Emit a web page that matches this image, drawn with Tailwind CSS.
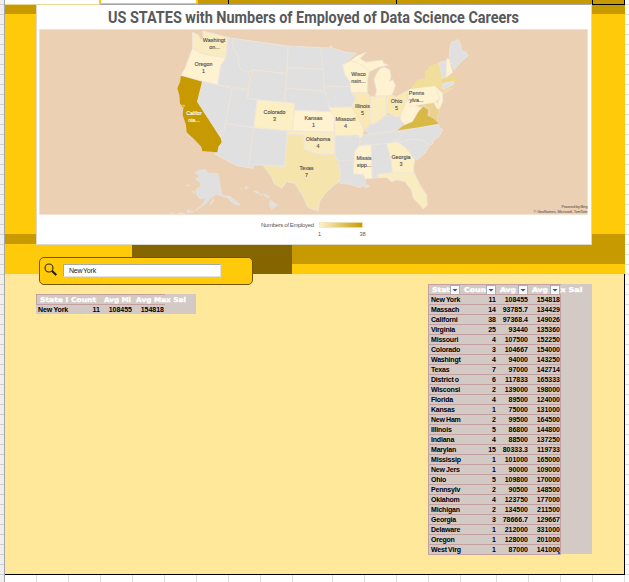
<!DOCTYPE html>
<html lang="en">
<head>
<meta charset="utf-8">
<title>Data Science Careers</title>
<script src="https://cdn.jsdelivr.net/npm/@tailwindcss/browser@4"></script>
</head>
<body class="w-[629px] h-[582px] overflow-hidden bg-white font-['Liberation_Sans',sans-serif]">
<div class="flex w-[629px] h-[582px]">
  <div class="w-[5px] h-full border-r border-[#a6a6a6] bg-[repeating-linear-gradient(to_bottom,#efefef_0_4px,#d0d0d0_4px_5px,#efefef_5px_10px)]"></div>
  <main class="relative w-[620px] h-full flex flex-col">
    <!-- cell row above the chart -->
    <div class="flex h-[4px] shrink-0">
      <div class="w-[94px] bg-white"></div>
      <div class="w-[99px] bg-white border-x-2 border-b border-[#ffca0a]"></div>
      <div class="w-[30px] bg-[#c69a00]"></div>
      <div class="w-px bg-black"></div>
      <div class="w-[167px] bg-[#c69a00]"></div>
      <div class="w-px bg-black"></div>
      <div class="w-[195px] bg-[#c69a00]"></div>
      <div class="w-[33px] bg-[#c69a00] border-x border-black"></div>
    </div>
    <!-- chart band -->
    <div class="flex h-[241px] shrink-0">
      <div class="w-[31px] flex flex-col bg-[#ffca0a] border-t border-[#ecd58c]">
        <div class="h-[9px] bg-[#c69a00]"></div><div class="h-[220px]"></div><div class="h-[10px] bg-[#c69a00]"></div>
      </div>
      <section class="w-[556px] bg-white border-x border-b border-[#dcd8cc] flex flex-col items-start">
        <div class="w-full h-px shrink-0 flex"><div class="w-[63px] bg-[#ecd58c]"></div><div class="grow bg-[#a6a6a6]"></div></div>
        <svg class="w-[554px] h-[24px] shrink-0" viewBox="37 5 554 24"><text x="108" y="23" font-family="Roboto, sans-serif" font-weight="700" font-size="16.2" fill="#595959" textLength="411" lengthAdjust="spacingAndGlyphs">US STATES with Numbers of Employed of Data Science Careers</text></svg>
        <svg class="w-[549px] h-[186px] shrink-0 ml-[2px]" viewBox="39 29 549 186">
          <rect x="39" y="29" width="549" height="186" fill="#f3e2d0"/>
          <rect x="40" y="30" width="547" height="184" fill="#ebd0b3"/>
          <g transform="translate(170 25) scale(.33333)" stroke="#efe6dc" stroke-width="2.6" stroke-linejoin="round" fill="#e0e0e0">
            <path fill="#f9ecc0" d="M67 22L85 30L92 45L100 38L98 18L174 37L166 98L120 92L85 82L68 68Z"/>
            <path fill="#fff2d0" d="M68 68L85 82L120 92L166 98L160 118L152 120L144 180L33 152L45 130Z"/>
            <path d="M96 170L187 190L166 310L156 318L152 338L81 230Z"/>
            <path d="M174 37L188 40L190 70L205 95L210 130L240 142L235 193L144 180L152 122L168 98Z"/>
            <path d="M188 40L355 63L350 145L246 135L240 142L222 140L208 128L205 95L190 72Z"/>
            <path d="M246 135L350 146L343 232L232 220Z"/>
            <path d="M187 190L235 195L232 220L262 224L250 308L166 296Z"/>
            <path d="M166 296L250 308L236 428L200 422L136 388L150 360L155 345L150 320L162 318Z"/>
            <path d="M250 308L352 318L344 424L280 420L250 420L250 430L236 428Z"/>
            <path d="M355 63L452 68L460 133L352 128Z"/>
            <path d="M352 128L460 133L463 160L462 200L445 197L347 190Z"/>
            <path d="M347 190L445 197L465 203L478 235L484 260L373 256L373 235L343 232Z"/>
            <path fill="#fdefc4" d="M262 224L373 235L368 318L252 308Z"/>
            <path fill="#fff2d0" d="M373 256L484 260L492 270L493 322L368 318Z"/>
            <path fill="#f9ecc0" d="M352 318L493 322L495 388L460 388L430 383L402 372L402 330L352 328Z"/>
            <path fill="#f5e5ad" d="M352 328L402 330L402 372L430 383L445 390L460 387L497 392L510 440L508 470L488 484L470 500L448 530L445 557L425 552L412 545L400 515L375 475L350 470L335 490L312 475L305 455L280 422L344 424Z"/>
            <path stroke="none" fill="#c69a00" d="M33 152L96 170L81 230L152 340L155 352L145 365L142 382L97 378L94 365L75 345L50 322L48 300L38 270L40 250L30 235L28 210L22 190L30 172Z"/>
            <path stroke="#f0dfb0" stroke-width="2" d="M34 241L44 241L39 250" fill="none"/>
            <path stroke-width="1" d="M75 443L88 436L105 433L118 445L145 445L155 508L172 514L190 522L209 536L207 542L190 536L172 518L150 512L140 508L131 514L122 520L106 538L85 552L70 560L98 538L107 520L90 522L80 510L78 493L92 483L90 470L75 463L88 455Z"/>
            <path stroke-width="1" d="M50 478L60 482L53 484ZM65 498L76 500L72 506ZM54 555L72 560L50 564ZM0 562L12 564L5 567ZM22 566L34 563L45 567ZM120 534L130 522L132 526L122 540ZM176 512L184 516L178 519ZM222 487L228 484L236 488L229 493ZM212 490L215 488L216 493ZM252 498L261 498L269 506L258 504ZM270 508L279 509L275 512ZM281 506L299 515L291 519L283 512ZM300 525L317 536L322 541L304 554L298 540Z"/>
            <path fill="none" stroke-dasharray="3 5" d="M52 332L62 335L70 344M62 355L74 361"/>
          </g>
          <g transform="translate(310 25) scale(.33333)" stroke="#efe6dc" stroke-width="2.2" stroke-linejoin="round" fill="#e0e0e0">
            <path d="M32 68L60 68L62 60L68 70L90 76L108 82L140 85L115 105L98 125L105 150L122 170L122 185L42 184L40 133Z"/>
            <path d="M42 184L122 185L130 205L138 220L125 248L58 246L48 210Z"/>
            <path d="M75 332L150 333L150 355L135 380L133 406L84 406L76 395Z"/>
            <path d="M84 406L133 406L130 445L162 448L158 458L168 465L164 474L178 484L168 488L158 482L150 488L138 484L120 478L90 475L92 440Z"/>
            <path d="M165 318L185 298L210 288L230 270L270 275L280 295L262 315L180 328Z"/>
            <path d="M155 330L185 328L290 315L262 345L240 355L148 362Z"/>
            <path d="M290 315L385 298L390 310L398 314L388 334L372 345L365 360L335 345L300 343L275 350L245 355L262 343Z"/>
            <path d="M265 352L300 343L335 345L360 360L345 385L320 406L290 372Z"/>
            <path d="M185 360L230 355L245 410L246 443L202 448L205 458L185 460Z"/>
            <path fill="#fdefc4" d="M56 248L125 246L135 265L150 290L162 315L158 330L150 340L145 330L75 332L73 275Z"/>
            <path fill="#fff2d0" d="M98 120L120 108L140 112L165 125L178 140L172 165L172 203L124 203L120 170L105 150Z"/>
            <path fill="#fff2d0" d="M120 108L140 93L168 82L158 92L150 101L168 112L195 108L218 106L222 116L235 120L205 127L178 140L160 122L140 112Z"/>
            <path fill="#fff2d0" d="M210 132L222 126L240 135L243 155L238 170L248 164L256 182L248 205L240 213L196 213L200 195L192 165L200 145Z"/>
            <path fill="#f9e8b4" d="M124 203L172 203L180 215L184 280L178 300L165 315L150 290L132 262L128 240L138 220Z"/>
            <path fill="#f9ecc0" d="M182 215L227 212L230 268L200 292L182 298Z"/>
            <path fill="#f9e8b4" d="M229 212L245 210L258 216L290 198L293 230L272 272L258 275L229 262Z"/>
            <path fill="#fff2d0" d="M293 225L315 240L340 240L325 258L308 290L285 300L272 285L272 270Z"/>
            <path fill="#fff2d0" d="M292 198L304 190L375 182L390 198L388 220L375 233L300 245Z"/>
            <path fill="#fff2d0" d="M380 190L398 204L398 230L388 252L380 240L388 220Z"/>
            <path fill="#efdf9a" stroke="none" d="M303 192L320 165L345 160L345 140L360 122L385 113L397 165L398 198L375 182Z"/>
            <path fill="#efdf9a" stroke-width="1" d="M397 202L412 193L428 189L418 196L398 208Z"/>
            <path d="M387 113L410 107L408 155L397 162Z"/>
            <path fill="#fff2d0" d="M410 107L412 99L418 105L428 142L408 158Z"/>
            <path d="M418 98L418 80L421 62L426 50L434 50L440 44L448 47L456 78L468 82L475 92L455 108L448 116L432 135Z"/>
            <path d="M398 176L430 168L432 178L410 188L400 195Z"/>
            <path fill="#eed98a" stroke="none" d="M397 161L430 154L433 150L440 160L449 164L448 172L438 168L425 168L398 173Z"/>
            <path fill="#ead28a" stroke-width="1" d="M316 242L372 233L380 248L388 255L384 270L382 288L372 288L358 275L360 252L345 242L330 247Z"/>
            <path fill="#fff2d0" stroke-width="1" d="M372 233L378 229L388 254L380 250Z"/>
            <path fill="#d9b945" stroke="none" d="M262 316L285 300L308 290L325 262L340 245L355 255L352 272L375 283L385 296L330 306Z"/>
            <path fill="none" stroke="#ebd0b3" d="M364 245L372 262L366 270L376 288"/>
            <path fill="#fdefc4" d="M230 355L265 352L290 372L315 405L310 425L312 445L247 445L245 410Z"/>
            <path fill="#fff2d0" d="M148 362L183 360L186 460L165 462L160 448L130 447L133 406L135 380Z"/>
            <path fill="#f9ecc0" d="M203 448L247 443L312 443L330 480L350 510L352 540L340 552L325 535L310 520L304 495L285 470L262 465L245 470L230 458L205 458Z"/>
          </g>
          <g font-family="'Liberation Sans', sans-serif" font-size="5.4" fill="#4c4c4c" stroke="#4c4c4c" stroke-width=".12" text-anchor="middle">
            <text x="214" y="42">Washingt</text><text x="214.500" y="49">on...</text>
            <text x="203.500" y="66">Oregon</text><text x="203.500" y="73">1</text>
            <g fill="#fff" stroke="#fff"><text x="194" y="115">Califor</text><text x="194" y="122">nia...</text></g>
            <text x="274.500" y="114">Colorado</text><text x="274.500" y="121">3</text>
            <text x="313.500" y="120">Kansas</text><text x="313.500" y="127">1</text>
            <text x="318" y="141">Oklahoma</text><text x="318" y="148">4</text>
            <text x="306.500" y="170">Texas</text><text x="306.500" y="177">7</text>
            <text x="345.500" y="121">Missouri</text><text x="345.500" y="128">4</text>
            <text x="358.500" y="76">Wisco</text><text x="358.500" y="83">nsin...</text>
            <text x="362.500" y="108">Illinois</text><text x="362.500" y="115">5</text>
            <text x="396.500" y="103">Ohio</text><text x="396.500" y="110">5</text>
            <text x="416.500" y="95">Penns</text><text x="416.500" y="102">ylva...</text>
            <text x="364" y="160">Missis</text><text x="364" y="167">sipp...</text>
            <text x="401" y="159">Georgia</text><text x="401" y="166">3</text>
          </g>
          <g font-family="'Liberation Sans', sans-serif" font-size="3.8" fill="#4a4a4a" text-anchor="end">
            <text x="587.500" y="208" textLength="26">Powered by Bing</text><text x="587.500" y="213" textLength="54">© GeoNames, Microsoft, TomTom</text>
          </g>
        </svg>
        <svg class="w-[554px] h-[29px] shrink-0" viewBox="37 215 554 29">
          <defs><linearGradient id="scale"><stop stop-color="#fff2d0"/><stop offset="1" stop-color="#c69a00"/></linearGradient></defs>
          <g font-family="'Liberation Sans', sans-serif" font-size="6" fill="#595959"><text x="261" y="227" textLength="53">Numbers of Employed</text><text x="318" y="236" font-size="5.6">1</text><text x="359.500" y="236" font-size="5.6">38</text></g>
          <rect x="319.500" y="222.500" width="43" height="5" fill="url(#scale)" stroke="#efe0b4" stroke-width=".6"/>
        </svg>
      </section>
      <div class="w-[33px] bg-[#ffca0a] flex flex-col border-t border-black">
        <div class="h-[9px] bg-[#c69a00]"></div><div class="h-[220px]"></div><div class="grow bg-[#c69a00]"></div>
      </div>
    </div>
    <!-- colour strip -->
    <div class="flex h-[29px] shrink-0">
      <div class="w-[127px] bg-[#ffca0a]"></div>
      <div class="w-[160px] bg-[#856500]"></div>
      <div class="grow bg-[#ffca0a]"><div class="h-[19px] bg-[#c69a00]"></div></div>
    </div>
    <!-- data area -->
    <div class="flex justify-between items-start h-[301px] shrink-0 bg-[#ffe899] border-b border-r border-black pl-[31px] pr-[32px]">
      <div class="mt-[20px] w-[160px] h-[20px] bg-[#d3cac5]">
        <div class="flex h-[11px] w-[129px] border-y border-l border-[#c4a0a0]">
          <svg class="w-[158px] h-[10px] shrink-0 overflow-visible" viewBox="0 0 158 10"><g font-family="'DejaVu Sans', sans-serif" font-weight="700" font-size="6.600" fill="#fff" stroke="#fff" stroke-width=".3"><text x="3" y="7.300" textLength="56" lengthAdjust="spacingAndGlyphs">State I Count</text><text x="67" y="7.300" textLength="27" lengthAdjust="spacingAndGlyphs">Avg Mi</text><text x="99" y="7.300" textLength="50" lengthAdjust="spacingAndGlyphs">Avg Max Sal</text></g></svg>
        </div>
        <div class="flex h-[9px] items-center text-[7px] leading-[9px] font-bold text-black whitespace-nowrap">
          <span class="w-[36px] pl-[2px] tracking-[-0.15px]">New York</span><span class="w-[28px] text-right">11</span><span class="w-[32px] text-right">108455</span><span class="w-[32px] text-right">154818</span>
        </div>
      </div>
      <div class="mt-[10px] w-[164px] h-[270px] bg-[#d3cac5]">
        <div class="relative flex h-[10px] w-[133px] border-t border-l border-[#c4a0a0]">
          <svg class="w-[163px] h-[9px] shrink-0 overflow-visible" viewBox="0 0 163 9"><g font-family="'DejaVu Sans', sans-serif" font-weight="700" font-size="6.600" fill="#fff" stroke="#fff" stroke-width=".3"><text x="3" y="7" textLength="18" lengthAdjust="spacingAndGlyphs">Stat</text><text x="35" y="7" textLength="22" lengthAdjust="spacingAndGlyphs">Coun</text><text x="71" y="7" textLength="16" lengthAdjust="spacingAndGlyphs">Avg</text><text x="103" y="7" textLength="16" lengthAdjust="spacingAndGlyphs">Avg</text><text x="131.500" y="7" textLength="22" lengthAdjust="spacingAndGlyphs">x Sal</text></g>
            <g fill="#f7fafc" stroke="#a3b1c2" stroke-width="1"><rect x="21.500" y=".5" width="9" height="9"/><rect x="57.500" y=".5" width="9" height="9"/><rect x="89.500" y=".5" width="9" height="9"/><rect x="121.500" y=".5" width="9" height="9"/></g>
            <path fill="#4a4f57" d="M23.500 4h5L26 6.500zM59.500 4h5L62 6.500zM91.500 4h5L94 6.500zM123.500 4h5L126 6.500z"/></svg>
        </div>
        <div id="rows" class="w-[133px] border-x border-b border-[#c4a0a0] relative"></div>
      </div>
    </div>
    <div class="grow bg-white flex">
      <div class="w-[32px] border-r border-[#dcdcdc]"></div><div class="w-[32px] border-r border-[#dcdcdc]"></div><div class="w-[32px] border-r border-[#dcdcdc]"></div><div class="w-[32px] border-r border-[#dcdcdc]"></div><div class="w-[32px] border-r border-[#dcdcdc]"></div><div class="w-[32px] border-r border-[#dcdcdc]"></div><div class="w-[32px] border-r border-[#dcdcdc]"></div><div class="w-[32px] border-r border-[#dcdcdc]"></div><div class="w-[32px] border-r border-[#dcdcdc]"></div><div class="w-[40px] border-r border-[#dcdcdc]"></div><div class="w-[32px] border-r border-[#dcdcdc]"></div><div class="w-[32px] border-r border-[#dcdcdc]"></div><div class="w-[32px] border-r border-[#dcdcdc]"></div><div class="w-[32px] border-r border-[#dcdcdc]"></div><div class="w-[36px] border-r border-[#dcdcdc]"></div><div class="w-[32px] border-r border-[#dcdcdc]"></div><div class="w-[32px] border-r border-[#dcdcdc]"></div><div class="w-[32px] border-r border-[#dcdcdc]"></div><div class="w-[32px] border-r border-[#dcdcdc]"></div>
    </div>
    <!-- search box floats over the strip and the data area -->
    <div class="absolute left-[34px] top-[257px] w-[214px] h-[28px] rounded-[5px] bg-[#ffca0a] border border-[#735500] flex items-center pl-[4px]">
      <svg class="w-[14px] h-[14px] -mt-[2px]" viewBox="0 0 14 14"><circle cx="5" cy="5" r="4" fill="none" stroke="#302a10" stroke-width="1.100"/><path d="M8 8L12.300 12" stroke="#1c1808" stroke-width="2"/></svg>
      <div class="ml-[5px] -mt-px w-[158px] h-[13px] bg-white border border-[#a8a8a8] border-b-[#e2e2e2] border-r-[#e2e2e2] pl-[5px] text-[7px] leading-[12px] tracking-[-0.2px] [word-spacing:-1px] text-[#222]">New York</div>
    </div>
  </main>
  <div class="w-[4px] h-full bg-[repeating-linear-gradient(to_bottom,#fff_0_4px,#dcdcdc_4px_5px,#fff_5px_10px)]"></div>
</div>
<script>
const data = `New York|11|108455|154818
Massach|14|93785.7|134429
Californi|38|97368.4|149026
Virginia|25|93440|135360
Missouri|4|107500|152250
Colorado|3|104667|154000
Washingt|4|94000|143250
Texas|7|97000|142714
District o|6|117833|165333
Wisconsi|2|139000|198000
Florida|4|89500|124000
Kansas|1|75000|131000
New Ham|2|99500|164500
Illinois|5|86800|144800
Indiana|4|88500|137250
Marylan|15|80333.3|119733
Mississip|1|101000|165000
New Jers|1|90000|109000
Ohio|5|109800|170000
Pennsylv|2|90500|148500
Oklahom|4|123750|177000
Michigan|2|134500|211500
Georgia|3|78666.7|129667
Delaware|1|212000|331000
Oregon|1|128000|201000
West Virg|1|87000|141000`;
document.getElementById('rows').innerHTML = data.split('\n').map(r => {
  const [s, c, a, b] = r.split('|');
  return `<div class="flex h-[10px] border-t border-[#c4a0a0] text-[7px] leading-[9px] font-bold text-black whitespace-nowrap"><span class="w-[33px] pl-[2px] tracking-[-0.2px] [word-spacing:-0.5px]">${s}</span><span class="w-[34px] text-right">${c}</span><span class="w-[32px] text-right">${a}</span><span class="w-[32px] text-right">${b}</span></div>`;
}).join('') + '<i class="absolute right-0 bottom-0 size-[2px] bg-[#3f51b5]"></i>';
</script>
</body>
</html>
